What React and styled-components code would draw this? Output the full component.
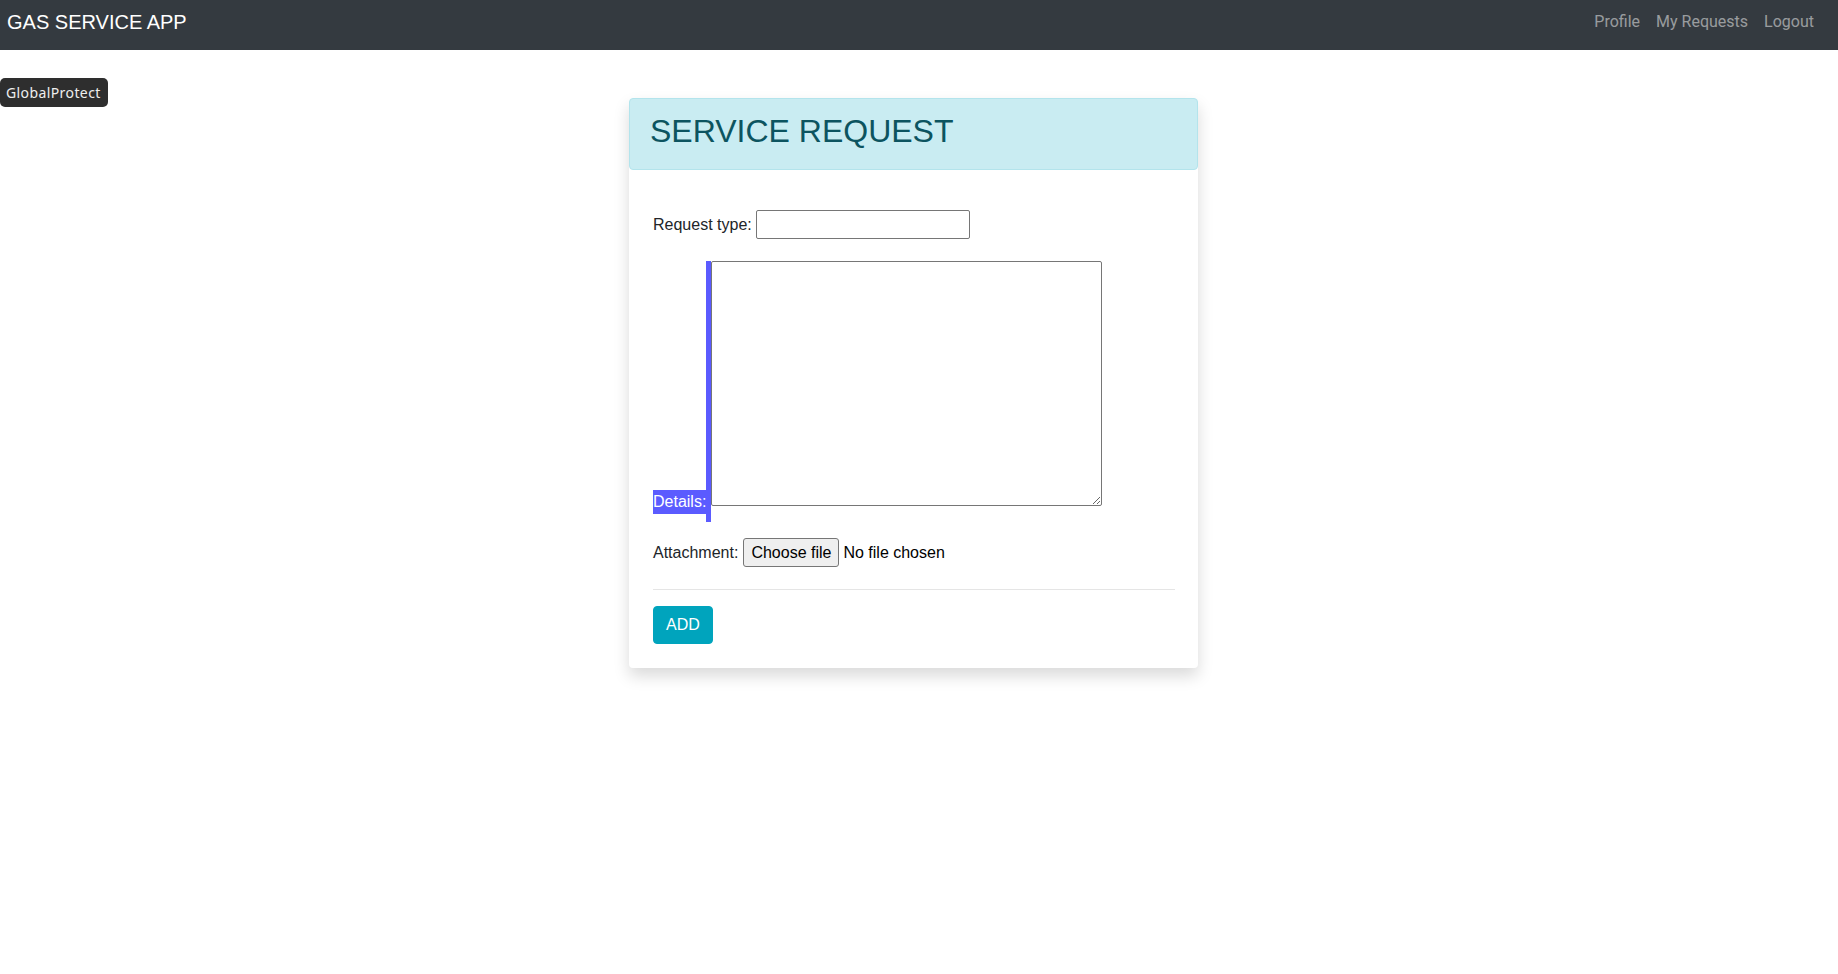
import React from 'react'
import styled, { createGlobalStyle } from 'styled-components'

const GlobalStyle = createGlobalStyle`
  html, body {
    margin: 0;
    padding: 0;
    background: #fff;
  }
  body {
    font-family: "Liberation Sans", Arial, sans-serif;
    font-size: 16px;
    line-height: 1.5;
    color: #212529;
  }
`

const Page = styled.div`
  position: relative;
  min-height: 974px;
`

const Navbar = styled.nav`
  height: 50px;
  background-color: #343a40;
  display: flex;
  align-items: center;
  justify-content: space-between;
  padding: 0 16px 0 7px;
`

const Brand = styled.a`
  color: #fff;
  font-size: 20px;
  line-height: 30px;
  margin-top: -6px;
  text-decoration: none;
`

const NavLinks = styled.ul`
  list-style: none;
  margin: 0;
  padding: 0;
  display: flex;
  margin-top: -7px;
`

const NavLink = styled.li`
  color: rgba(255, 255, 255, 0.5);
  font-family: Roboto, "Liberation Sans", sans-serif;
  font-size: 16px;
  padding: 0 8px;
`

const ExtensionBadge = styled.div`
  position: absolute;
  left: 0;
  top: 78px;
  height: 29px;
  padding: 0 7px 0 6px;
  display: flex;
  align-items: center;
  background: #2e2e2e;
  color: #eee;
  border-radius: 5px;
  font-family: "Noto Sans", "DejaVu Sans", sans-serif;
  font-size: 14px;
  letter-spacing: 0.4px;
`

const Main = styled.main`
  display: flex;
  justify-content: center;
  padding: 48px 0 0 0;
  padding-right: 11px;
`

const Card = styled.section`
  width: 569px;
  background: #fff;
  border-radius: 4px;
  box-shadow: 0 8px 16px rgba(0, 0, 0, 0.15);
`

const CardHeader = styled.header`
  height: 72px;
  box-sizing: border-box;
  background: #c9ecf2;
  border: 1px solid #b3e4ec;
  border-radius: 4px;
  padding: 0 20px;
  display: flex;
  align-items: center;
`

const Title = styled.h2`
  margin: 0 0 6px 0;
  font-size: 32px;
  font-weight: 400;
  line-height: 1.2;
  color: #0c5460;
`

const CardBody = styled.div`
  padding: 40px 23px 24px 24px;
`

const Field = styled.div`
  display: flex;
  align-items: ${props => (props.$bottom ? 'flex-end' : 'center')};
  margin-top: ${props => props.$gap || 0}px;
`

const Label = styled.label`
  font-size: 16px;
  line-height: 24px;
  margin-right: ${props => props.$space || 0}px;
`

const TextInput = styled.input`
  width: 214px;
  height: 29px;
  box-sizing: border-box;
  border: 1px solid #767676;
  border-radius: 2px;
  padding: 1px 3px;
  font: inherit;
`

const HighlightLabel = styled.label`
  background: #5b5bff;
  color: #fff;
  line-height: 24px;
  margin-bottom: 8px;
`

const Marker = styled.span`
  width: 5px;
  align-self: stretch;
  background: #5b5bff;
`

const TextArea = styled.textarea`
  width: 391px;
  height: 245px;
  box-sizing: border-box;
  margin: 0 0 16px 0;
  border: 1px solid #767676;
  border-radius: 2px;
  font: inherit;
  resize: both;
`

const FileButton = styled.button`
  height: 29px;
  box-sizing: border-box;
  padding: 0 7px;
  background: #efefef;
  border: 1px solid #767676;
  border-radius: 3px;
  font-family: "Liberation Sans", Arial, sans-serif;
  font-size: 16px;
  color: #000;
`

const FileStatus = styled.span`
  margin-left: 4px;
  color: #000;
`

const Divider = styled.hr`
  margin: 22px 0 16px 0;
  border: 0;
  border-top: 1px solid rgba(0, 0, 0, 0.1);
`

const SubmitButton = styled.button`
  height: 38px;
  padding: 0 12px;
  background: #00a4bd;
  color: #fff;
  border: 1px solid #00a4bd;
  border-radius: 4px;
  font-family: "Liberation Sans", Arial, sans-serif;
  font-size: 16px;
`

export default function App() {
  return (
    <Page>
      <GlobalStyle />
      <Navbar>
        <Brand href="#">GAS SERVICE APP</Brand>
        <NavLinks>
          <NavLink>Profile</NavLink>
          <NavLink>My Requests</NavLink>
          <NavLink>Logout</NavLink>
        </NavLinks>
      </Navbar>
      <ExtensionBadge>GlobalProtect</ExtensionBadge>
      <Main>
        <Card>
          <CardHeader>
            <Title>SERVICE REQUEST</Title>
          </CardHeader>
          <CardBody>
            <Field>
              <Label $space={4}>Request type:</Label>
              <TextInput type="text" />
            </Field>
            <Field $bottom $gap={22}>
              <HighlightLabel>Details:</HighlightLabel>
              <Marker />
              <TextArea />
            </Field>
            <Field $gap={16}>
              <Label $space={5}>Attachment:</Label>
              <FileButton type="button">Choose file</FileButton>
              <FileStatus>No file chosen</FileStatus>
            </Field>
            <Divider />
            <SubmitButton type="button">ADD</SubmitButton>
          </CardBody>
        </Card>
      </Main>
    </Page>
  )
}
